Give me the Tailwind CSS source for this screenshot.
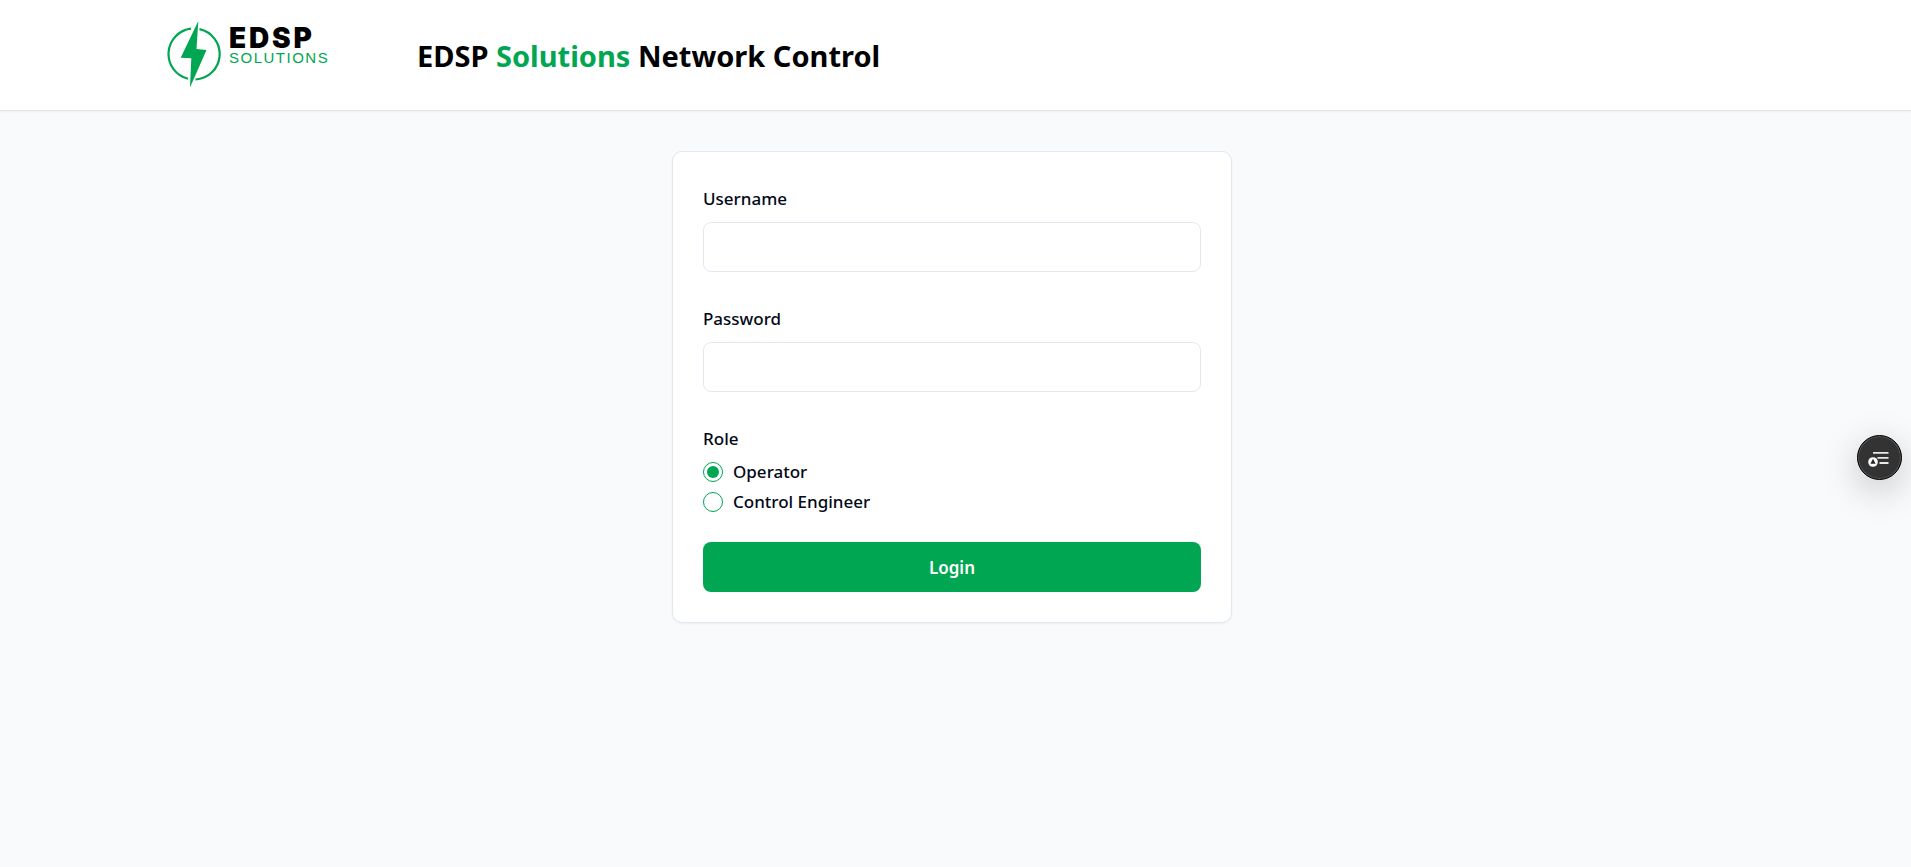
<!DOCTYPE html>
<html lang="en">
<head>
<meta charset="utf-8">
<meta name="viewport" content="width=device-width, initial-scale=1">
<title>EDSP Solutions Network Control</title>
<script src="https://cdn.jsdelivr.net/npm/@tailwindcss/browser@4"></script>
</head>
<body class="min-h-screen bg-[#f8fafc] font-['Segoe_UI','Noto_Sans',sans-serif] text-[#020817]">
<header class="border-b border-[#e2e4e8] bg-white pr-[7px] shadow-xs">
  <div class="mx-auto flex h-[110px] max-w-[1600px] items-center px-[15px]">
    <a href="#" aria-label="EDSP Solutions" class="flex w-[250px] items-center pb-[2px]">
      <svg class="h-[70px] w-[56px] shrink-0" viewBox="0 0 56 70" fill="none" aria-hidden="true">
        <path d="M24 9.700A25.500 25.500 0 0 0 21 59.800M32.500 10.100A25.500 25.500 0 0 1 28.500 60.500" stroke="#00a651" stroke-width="2.200"/>
        <path d="M31.300 2L13.700 38.700L24.300 39.300L23 68.500L39.500 31L29.500 30Z" fill="#00a651"/>
      </svg>
      <span class="flex flex-col pb-4 pl-[6px]">
        <span class="font-['Inter',sans-serif] text-[28px] leading-6 font-black tracking-widest text-black">EDSP</span>
        <span class="font-['Liberation_Sans',sans-serif] text-[15px] leading-4 tracking-widest text-[#00a651]">SOLUTIONS</span>
      </span>
    </a>
    <h1 class="pt-[2px] text-[29px] leading-10 font-bold text-black">EDSP <span class="text-[#00a651]">Solutions</span> Network Control</h1>
  </div>
</header>
<main class="px-4 pt-10 pr-[23px]">
  <form class="mx-auto flex max-w-[560px] flex-col rounded-[10px] border border-[#e2e8f0] bg-white p-[30px] text-[17px] leading-6 font-medium shadow-xs">
    <div class="mb-[30px] flex flex-col gap-[11px] pt-[5px]">
      <label for="username">Username</label>
      <input id="username" type="text" class="h-[50px] w-full rounded-lg border border-[#e2e8f0] bg-white px-4 outline-none">
    </div>
    <div class="mb-[30px] flex flex-col gap-[11px] pt-[5px]">
      <label for="password">Password</label>
      <input id="password" type="password" class="h-[50px] w-full rounded-lg border border-[#e2e8f0] bg-white px-4 outline-none">
    </div>
    <fieldset class="mb-[30px] flex flex-col gap-[10px] pt-[5px]">
      <legend class="float-left mb-px">Role</legend>
      <div class="flex h-5 items-center gap-[10px]">
        <input id="operator" type="radio" name="role" checked class="size-5 appearance-none rounded-full border border-[#00a651] p-[3px] checked:bg-[#00a651] checked:bg-clip-content">
        <label for="operator">Operator</label>
      </div>
      <div class="flex h-5 items-center gap-[10px]">
        <input id="engineer" type="radio" name="role" class="size-5 appearance-none rounded-full border border-[#00a651] p-[3px] checked:bg-[#00a651] checked:bg-clip-content">
        <label for="engineer">Control Engineer</label>
      </div>
    </fieldset>
    <button type="submit" class="h-[50px] w-full rounded-lg bg-[#00a651] pt-[2px] font-semibold text-white">Login</button>
  </form>
</main>
<button type="button" aria-label="Open menu" class="fixed top-[435px] right-[9px] flex size-[45px] items-center justify-center rounded-full border border-black bg-[#333] shadow-[0_10px_36px_rgba(0,0,0,0.22),inset_0_0_0_1px_#555]">
  <svg class="size-6" viewBox="0 0 24 24" aria-hidden="true">
    <path d="M5 6.800H20.500M9.500 11.800H20.500M11.500 17H20.500" stroke="#e8e8e8" stroke-width="1.800"/>
    <circle cx="5" cy="16" r="4.800" fill="#fff"/>
    <path d="M5 12.800L7.600 17.800H2.400Z" fill="#222"/>
  </svg>
</button>
</body>
</html>
